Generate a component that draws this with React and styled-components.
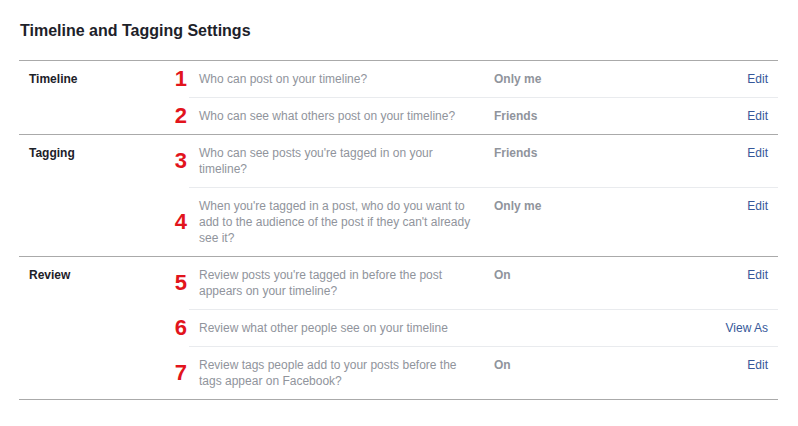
import styled, { createGlobalStyle } from "styled-components";

const GlobalStyle = createGlobalStyle`
  html, body {
    margin: 0;
    padding: 0;
    background: #ffffff;
  }
  body {
    font-family: "Liberation Sans", Arial, Helvetica, sans-serif;
    font-size: 12px;
    color: #1d2129;
  }
`;

const sections = [
  {
    id: "timeline",
    label: "Timeline",
    items: [
      { num: 1, question: "Who can post on your timeline?", value: "Only me", action: "Edit" },
      { num: 2, question: "Who can see what others post on your timeline?", value: "Friends", action: "Edit" },
    ],
  },
  {
    id: "tagging",
    label: "Tagging",
    items: [
      { num: 3, question: "Who can see posts you're tagged in on your timeline?", value: "Friends", action: "Edit" },
      {
        num: 4,
        question:
          "When you're tagged in a post, who do you want to add to the audience of the post if they can't already see it?",
        value: "Only me",
        action: "Edit",
      },
    ],
  },
  {
    id: "review",
    label: "Review",
    items: [
      {
        num: 5,
        question: "Review posts you're tagged in before the post appears on your timeline?",
        value: "On",
        action: "Edit",
      },
      { num: 6, question: "Review what other people see on your timeline", value: "", action: "View As" },
      {
        num: 7,
        question: "Review tags people add to your posts before the tags appear on Facebook?",
        value: "On",
        action: "Edit",
      },
    ],
  },
];

export default function App() {
  return (
    <>
      <GlobalStyle />
      <Page>
        <Title>Timeline and Tagging Settings</Title>
        <Table>
          {sections.map((section) => (
            <Section key={section.id}>
              <SectionLabel>{section.label}</SectionLabel>
              <ItemList>
                {section.items.map((item, i) => (
                  <Item key={item.num}>
                    <Marker>{item.num}</Marker>
                    <ItemBody $first={i === 0}>
                      <Question>{item.question}</Question>
                      <Value>{item.value}</Value>
                      <ActionLink href="#">{item.action}</ActionLink>
                    </ItemBody>
                  </Item>
                ))}
              </ItemList>
            </Section>
          ))}
        </Table>
      </Page>
    </>
  );
}

const Page = styled.div`
  padding: 21px 20px 20px 19px;
`;

const Title = styled.h2`
  margin: 0 0 19px 1px;
  font-size: 16px;
  line-height: 20px;
  font-weight: bold;
  color: #1d2129;
`;

const Table = styled.div`
  border-bottom: 1px solid #aaaaaa;
`;

const Section = styled.div`
  display: flex;
  border-top: 1px solid #aaaaaa;
`;

const SectionLabel = styled.div`
  width: 141px;
  flex-shrink: 0;
  box-sizing: border-box;
  padding: 10px 10px 0 10px;
  font-weight: bold;
  font-size: 12px;
  line-height: 16px;
  color: #1d2129;
`;

const ItemList = styled.div`
  flex: 1;
  display: flex;
  flex-direction: column;
`;

const Item = styled.div`
  display: flex;
  align-items: stretch;
`;

const Marker = styled.div`
  width: 29px;
  flex-shrink: 0;
  box-sizing: border-box;
  padding-right: 2px;
  display: flex;
  align-items: center;
  justify-content: flex-end;
  font-size: 22px;
  font-weight: bold;
  color: #e2141c;
`;

const ItemBody = styled.div`
  flex: 1;
  display: grid;
  grid-template-columns: 280px 1fr auto;
  column-gap: 15px;
  padding: 10px;
  border-top: ${(props) => (props.$first ? "none" : "1px solid #e9ebee")};
  line-height: 16px;
`;

const Question = styled.div`
  color: #90949c;
`;

const Value = styled.div`
  color: #90949c;
  font-weight: bold;
`;

const ActionLink = styled.a`
  color: #365899;
  text-decoration: none;
  text-align: right;
`;
